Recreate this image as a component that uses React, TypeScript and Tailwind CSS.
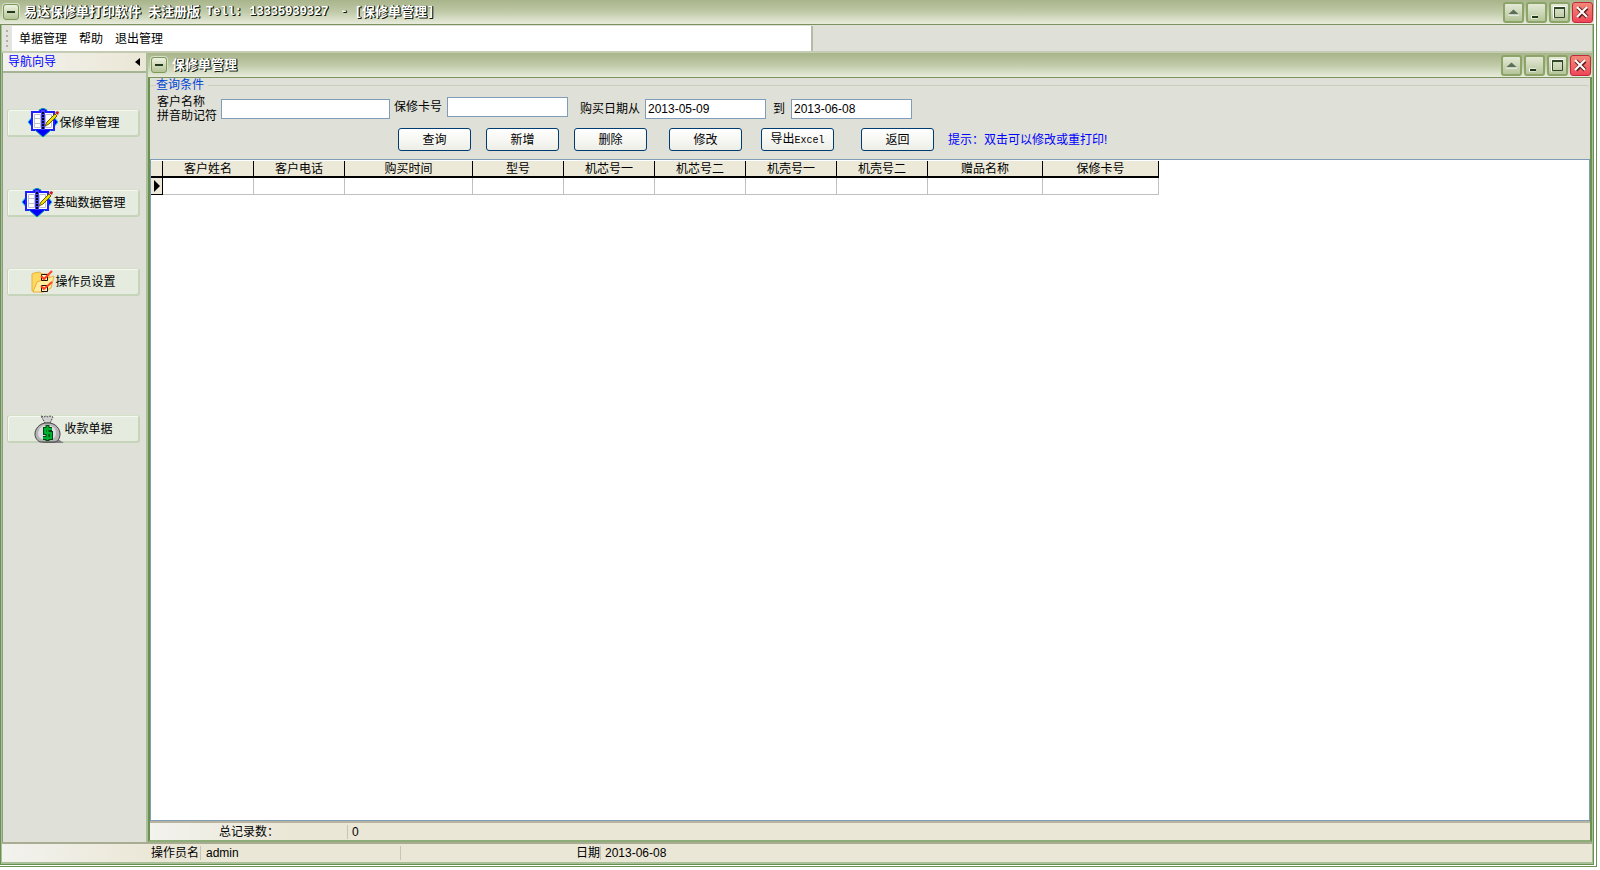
import { useState } from "react";
import type { ReactNode } from "react";

const columns = [
  { title: "客户姓名", width: "w-[91px]" },
  { title: "客户电话", width: "w-[91px]" },
  { title: "购买时间", width: "w-[128px]" },
  { title: "型号", width: "w-[91px]" },
  { title: "机芯号一", width: "w-[91px]" },
  { title: "机芯号二", width: "w-[91px]" },
  { title: "机壳号一", width: "w-[91px]" },
  { title: "机壳号二", width: "w-[91px]" },
  { title: "赠品名称", width: "w-[115px]" },
  { title: "保修卡号", width: "w-[116px]" },
];

const BookIcon = () => (
  <svg width="32" height="30" viewBox="0 0 32 30" className="shrink-0">
    <path d="M1 14L7 7v14zM31 14L25 7v14z" fill="#0000ff" />
    <path d="M6 8L1 14l5 6M26 8l5 6-5 6" fill="none" stroke="#00c8c8" />
    <path d="M16 0L24 5H8z" fill="#0000ff" />
    <path d="M12 2l4-2 4 2" fill="none" stroke="#00a0a0" />
    <path d="M5 4h22v18H5z" fill="#fff" stroke="#2020ff" strokeWidth="2" />
    <path d="M7.5 6.5h6v13h-6zM7.5 10.5h6M7.5 15.5h6M18.5 6.5h6v13h-6z" fill="none" stroke="#c0c0c8" />
    <path d="M16 2v20" stroke="#4040ff" strokeWidth="4" />
    <path d="M16 4v19" stroke="#000030" strokeWidth="2" strokeDasharray="2 1" />
    <path d="M8 22h16l-8 7z" fill="#0000ff" />
    <path d="M8 22l8 7 8-7" fill="none" stroke="#00a0a0" />
    <path d="M18 18l2-4 8-8 2 2-8 8z" fill="#f0e000" stroke="#706000" />
    <path d="M28 5l2-2 2 1-1 3z" fill="#d01818" />
  </svg>
);

const FolderIcon = () => (
  <svg width="24" height="24" viewBox="0 0 24 24" className="shrink-0">
    <path d="M1 21V4l2-1 6-1 1 2h8v13l-5 5z" fill="#ffd860" stroke="#e8b040" />
    <path d="M2 22l4-10 8-3 9-3-3 12-8 4z" fill="#ffec9c" stroke="#e8b040" />
    <path d="M10.5 4.5h6v6h-6zM10.5 15.5h6v6h-6z" fill="#fff3c0" stroke="#201000" />
    <path d="M10 6l3 3 8-8M10 16l3 3 8-7" fill="none" stroke="#ff4020" strokeWidth="2" />
  </svg>
);

const MoneyIcon = () => (
  <svg width="30" height="29" viewBox="0 0 30 29" className="shrink-0">
    <path d="M7 28h23l-6-4z" fill="#808080" />
    <path d="M7 1l3 1 2-1 2 1 2-1 3 1-3 6h-5z" fill="#d0d0d0" stroke="#484848" strokeDasharray="2 1" />
    <path d="M11 8C5 9 1 14 1 19c0 4 3 8 6 8h13c4 0 6-4 6-8 0-5-4-10-10-11z" fill="#b4b4b4" stroke="#404040" />
    <path d="M4 18c1-5 4-8 9-8s9 3 9 8-4 7-9 7-9-2-9-7z" fill="#e0dce4" />
    <path d="M13.5 10v16" stroke="#004810" strokeWidth="4" />
    <path d="M18 14h-7v4h6v5H9" fill="none" stroke="#004810" strokeWidth="4" />
    <path d="M13.5 11v14M18 14h-7v4h6v5H9" fill="none" stroke="#00b030" strokeWidth="2" />
  </svg>
);

const SystemMark = () => (
  <span className="flex h-4 w-4 shrink-0 items-center justify-center rounded-[3px] border border-[#7c9858] bg-linear-to-b from-[#eef2e0] to-[#b4c496] shadow-[0_0_0_1px_#d8e0c8]">
    <span className="h-[2px] w-2 bg-[#20381c]" />
  </span>
);

const CaptionButton = ({ label, close, children }: { label: string; close?: boolean; children: ReactNode }) => (
  <button
    aria-label={label}
    className={
      close
        ? "h-[21px] w-[21px] rounded-[3px] border border-[#c02840] bg-linear-to-b from-[#f08878] to-[#f04458]"
        : "h-[21px] w-[21px] rounded-[3px] border-2 border-[#8ca468] bg-linear-to-b from-[#e4e9d6] to-[#b6c59a]"
    }
  >
    <svg width="19" height="19" viewBox="0 0 19 19" className={close ? "" : "-m-px"}>
      {children}
    </svg>
  </button>
);

const CaptionBar = ({ children }: { children: ReactNode }) => (
  <header className="flex h-[25px] shrink-0 items-center border-b border-[#7c9060] bg-linear-to-b from-[#a8b48a] via-[#c0caa8] to-[#e8ecdc] pr-px pl-[3px]">
    <SystemMark />
    <h1 className="flex flex-1 items-center pl-[5px] text-[13px] leading-4 font-bold whitespace-pre text-white [text-shadow:1px_1px_0_#101808,1px_0_0_#101808]">
      {children}
    </h1>
    <div className="flex gap-[2px]">
      <CaptionButton label="卷起">
        <path d="M4 11.5l5.500-5 5.500 5z" fill="#5c7058" />
        <path d="M4 12h11" stroke="#fff" />
      </CaptionButton>
      <CaptionButton label="最小化">
        <path d="M4 12.500h7v3H4z" fill="#fff" />
        <path d="M5 13h6v2H5z" fill="#20381c" />
      </CaptionButton>
      <CaptionButton label="最大化">
        <path d="M3.500 15.500v-12h12" fill="none" stroke="#fff" />
        <path d="M4.500 5.500h10v9h-10z" fill="none" stroke="#304828" />
        <path d="M4 5h11" stroke="#304828" strokeWidth="2" />
      </CaptionButton>
      <CaptionButton label="关闭" close>
        <path d="M5 5l9 9M14 5l-9 9" stroke="#602020" strokeWidth="4" />
        <path d="M4 4l10 10M14 4L4 14" stroke="#fff" strokeWidth="2" />
      </CaptionButton>
    </div>
  </header>
);

const NavButton = ({ icon, children }: { icon: ReactNode; children: ReactNode }) => (
  <button className="flex h-7 w-[133px] items-center justify-center rounded-[3px] border border-[#c4d4b8] border-t-[#d4e0c8] bg-[#e5ebdf] shadow-[inset_1px_1px_0_#f4f8f0,inset_-1px_-1px_0_#c8d4bc]">
    {icon}
    {children}
  </button>
);

const ActionButton = ({ children }: { children: ReactNode }) => (
  <button className="h-[23px] w-[73px] rounded-[3px] border border-[#003c74] bg-linear-to-b from-white to-[#eeeee8]">
    {children}
  </button>
);

const field = "h-5 border border-[#7f9db9] bg-white px-[2px] outline-none";

export default function App() {
  const [name, setName] = useState("");
  const [card, setCard] = useState("");
  const [from, setFrom] = useState("2013-05-09");
  const [to, setTo] = useState("2013-06-08");

  return (
    <div className="min-h-screen bg-white pr-[3px] pb-[3px] font-['Liberation_Sans','Noto_Sans_CJK_SC',sans-serif] text-xs leading-[14px] text-black">
      <div className="flex min-h-[867px] flex-col border-r border-b border-[#6c9050] bg-white pr-[2px] pb-px">
        <div className="flex flex-1 flex-col rounded-t-md bg-[#dfe0d8]">
          <CaptionBar>
            <span>易达保修单打印软件</span>
            <span className="pl-[7px]">未注册版</span>
            <span className="pl-[6px] font-['Liberation_Mono',monospace] text-xs">Tell: 13335939327</span>
            <span className="pl-3 font-['Liberation_Mono',monospace] text-xs">- [</span>
            <span>保修单管理</span>
            <span className="font-['Liberation_Mono',monospace] text-xs">]</span>
          </CaptionBar>

          <div className="flex flex-1 border-x border-b border-[#6c9050]">
            <div className="flex min-w-0 flex-1 flex-col border-x border-b-2 border-[#a8c098]">
              <div className="flex h-7 border-b-2 border-[#c4ccb4] pt-px">
                <nav className="flex w-[811px] items-center border-r-2 border-[#b4bca4] bg-white">
                  <span className="mr-[7px] flex h-full w-[10px] flex-col items-center justify-center gap-[3px] bg-[#e4e4de]">
                    <i className="h-[2px] w-[2px] bg-[#b0b0a8]" />
                    <i className="h-[2px] w-[2px] bg-[#b0b0a8]" />
                    <i className="h-[2px] w-[2px] bg-[#b0b0a8]" />
                    <i className="h-[2px] w-[2px] bg-[#b0b0a8]" />
                  </span>
                  <button className="mr-3">单据管理</button>
                  <button className="mr-3">帮助</button>
                  <button>退出管理</button>
                </nav>
              </div>

              <div className="flex flex-1">
                <aside className="flex w-[146px] shrink-0 flex-col border-r-2 border-l border-r-[#a8c098] border-l-[#8c9c80]">
                  <div className="flex h-5 items-center justify-between border-b-2 border-[#a4b494] bg-linear-to-r from-[#f2f2ee] to-[#ebe7d6] pr-[6px] pl-[5px]">
                    <h2 className="text-[#0000ff]">导航向导</h2>
                    <button aria-label="收起">
                      <svg width="5" height="8" viewBox="0 0 5 8">
                        <path d="M5 0v8L0 4z" />
                      </svg>
                    </button>
                  </div>
                  <div className="flex flex-col pt-9 pl-1">
                    <NavButton icon={<BookIcon />}>保修单管理</NavButton>
                    <div className="pt-[52px]">
                      <NavButton icon={<BookIcon />}>基础数据管理</NavButton>
                    </div>
                    <div className="pt-[51px]">
                      <NavButton icon={<FolderIcon />}>操作员设置</NavButton>
                    </div>
                    <div className="pt-[119px]">
                      <NavButton icon={<MoneyIcon />}>收款单据</NavButton>
                    </div>
                  </div>
                </aside>

                <main className="flex min-w-0 flex-1 flex-col">
                  <CaptionBar>保修单管理</CaptionBar>
                  <div className="flex flex-1 flex-col border-x-2 border-b-2 border-[#6c9050] border-b-[#8cac78]">
                    <fieldset className="mr-px h-[81px] rounded-[3px] border-t border-[#c8ccb8]">
                      <legend className="ml-[6px] pr-1 text-[#0046d5]">查询条件</legend>
                      <div className="flex h-8 items-center pt-[2px] pl-[7px]">
                        <label htmlFor="name" className="w-16">
                          客户名称
                          <br />
                          拼音助记符
                        </label>
                        <input id="name" autoFocus value={name} onChange={(e) => setName(e.target.value)} className={`${field} w-[169px]`} />
                        <div className="flex items-center pb-1">
                          <label htmlFor="card" className="w-[57px] pl-1">保修卡号</label>
                          <input id="card" value={card} onChange={(e) => setCard(e.target.value)} className={`${field} w-[121px]`} />
                        </div>
                        <label htmlFor="from" className="w-[77px] pl-3">购买日期从</label>
                        <input id="from" value={from} onChange={(e) => setFrom(e.target.value)} className={`${field} w-[121px]`} />
                        <label htmlFor="to" className="w-[25px] pl-[7px]">到</label>
                        <input id="to" value={to} onChange={(e) => setTo(e.target.value)} className={`${field} w-[121px]`} />
                      </div>
                      <div className="flex items-center pt-1 pl-[248px]">
                        <div className="flex gap-[15px]">
                          <ActionButton>查询</ActionButton>
                          <ActionButton>新增</ActionButton>
                          <ActionButton>删除</ActionButton>
                        </div>
                        <div className="flex gap-[19px] pl-[22px]">
                          <ActionButton>修改</ActionButton>
                          <ActionButton>
                            导出<span className="font-['Liberation_Mono',monospace] text-[10px]">Excel</span>
                          </ActionButton>
                        </div>
                        <div className="pl-[27px]">
                          <ActionButton>返回</ActionButton>
                        </div>
                        <p className="pl-[14px] text-[#0000ff]">提示：双击可以修改或重打印!</p>
                      </div>
                    </fieldset>

                    <div className="flex-1 border border-[#7f9db9] bg-white pt-px">
                      <table className="table-fixed border-separate border-spacing-0">
                        <thead>
                          <tr className="h-[17px] bg-[#ece9d8]">
                            <th aria-label="当前行" className="w-3 border-r border-b-2 border-black p-0" />
                            {columns.map((c) => (
                              <th key={c.title} className={`${c.width} border-r border-b-2 border-black p-0 font-normal`}>
                                {c.title}
                              </th>
                            ))}
                          </tr>
                        </thead>
                        <tbody>
                          <tr className="h-[17px]">
                            <td className="border-r border-b border-black bg-[#ece9d8] p-0">
                              <svg width="7" height="12" viewBox="0 0 7 12" className="ml-[3px]">
                                <path d="M0 0l6 6-6 6z" />
                              </svg>
                            </td>
                            {columns.map((c) => (
                              <td key={c.title} className="border-r border-b border-[#c0c0c0] p-0" />
                            ))}
                          </tr>
                        </tbody>
                      </table>
                    </div>
                    <div className="flex h-[19px] items-center border-t-2 border-[#b8b4a0] bg-linear-to-r from-[#f2f2ee] to-[#ebe7d6] to-10%">
                      <span className="w-[198px] border-r border-[#c8c4b0] pl-[69px]">总记录数：</span>
                      <span className="pl-1">0</span>
                    </div>
                  </div>
                </main>
              </div>

              <footer className="flex h-5 items-center border-t-2 border-[#a8ac90] bg-linear-to-r from-[#f2f2ee] to-[#ebe7d6] to-10%">
                <span className="w-[199px] border-r border-[#c8c4b0] pl-[149px]">操作员名</span>
                <span className="w-[200px] border-r border-[#c8c4b0] pl-[5px]">admin</span>
                <span className="w-[200px] border-r border-[#c8c4b0] pl-[175px]">日期</span>
                <span className="pl-1">2013-06-08</span>
              </footer>
            </div>
          </div>
        </div>
      </div>
    </div>
  );
}
